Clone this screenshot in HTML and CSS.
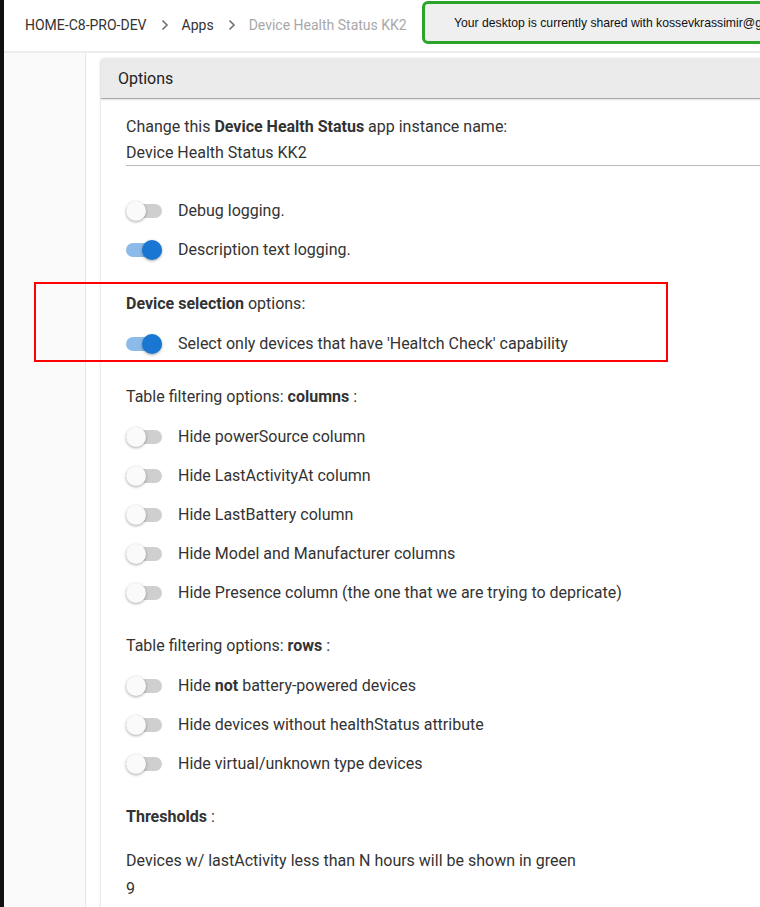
FILE: index.html
```html
<!DOCTYPE html>
<html lang="en">

<head>
    <meta charset="UTF-8">
    <meta name="viewport" content="width=device-width, initial-scale=1.0">
    <title>Device Health Status KK2</title>
    <link rel="stylesheet" href="styles.css">
</head>

<body>
    <div class="page">
        <header class="topbar">
            <nav class="crumbs">
                <span class="crumb">HOME-C8-PRO-DEV</span>
                <svg class="chev" width="8" height="12" viewBox="0 0 8 12"><path d="M1.5 1.5L6 6l-4.5 4.5"/></svg>
                <span class="crumb">Apps</span>
                <svg class="chev" width="8" height="12" viewBox="0 0 8 12"><path d="M1.5 1.5L6 6l-4.5 4.5"/></svg>
                <span class="crumb current">Device Health Status KK2</span>
            </nav>
        </header>

        <div class="layout">
            <aside class="sidebar"></aside>
            <main class="content">
                <section class="card">
                    <div class="card-head">Options</div>
                    <div class="card-body">
                        <p class="line">Change this <b>Device Health Status</b> app instance name:</p>
                        <div class="field">Device Health Status KK2</div>

                        <ul class="toggles first">
                            <li class="row"><span class="switch"><span class="thumb"></span></span>Debug logging.</li>
                            <li class="row"><span class="switch on"><span class="thumb"></span></span>Description text logging.</li>
                        </ul>

                        <p class="line section selection">
                            <b>Device selection</b> options:</p>
                        <ul class="toggles">
                            <li class="row"><span class="switch on"><span class="thumb"></span></span>Select only devices that have 'Healtch Check' capability</li>
                        </ul>

                        <p class="line section">Table filtering options: <b>columns</b> :</p>
                        <ul class="toggles">
                            <li class="row"><span class="switch"><span class="thumb"></span></span>Hide powerSource column</li>
                            <li class="row"><span class="switch"><span class="thumb"></span></span>Hide LastActivityAt column</li>
                            <li class="row"><span class="switch"><span class="thumb"></span></span>Hide LastBattery column</li>
                            <li class="row"><span class="switch"><span class="thumb"></span></span>Hide Model and Manufacturer columns</li>
                            <li class="row"><span class="switch"><span class="thumb"></span></span>Hide Presence column (the one that we are trying to depricate)</li>
                        </ul>

                        <p class="line section">Table filtering options: <b>rows</b> :</p>
                        <ul class="toggles">
                            <li class="row"><span class="switch"><span class="thumb"></span></span><span>Hide <b>not</b> battery-powered devices</span></li>
                            <li class="row"><span class="switch"><span class="thumb"></span></span>Hide devices without healthStatus attribute</li>
                            <li class="row"><span class="switch"><span class="thumb"></span></span>Hide virtual/unknown type devices</li>
                        </ul>

                        <p class="line section"><b>Thresholds</b> :</p>
                        <p class="line gap">Devices w/ lastActivity less than N hours will be shown in green</p>
                        <div class="value">9</div>
                    </div>
                </section>
            </main>
        </div>

        <!-- overlays from the screen share: the banner and the red annotation box -->
        <div class="share-banner">Your desktop is currently shared with kossevkrassimir@gmail.com</div>
        <div class="highlight"></div>
    </div>
</body>

</html>
```

FILE: styles.css
```css
html, body {
    margin: 0;
    height: 100%;
    overflow: hidden;
}

body {
    font-family: "Roboto", "Liberation Sans", sans-serif;
    font-size: 16px;
    color: #333;
    background: #fff;
}

.page {
    position: relative;
    height: 100%;
    border-left: 4px solid #111;
    display: flex;
    flex-direction: column;
    overflow: hidden;
}

.topbar {
    height: 51px;
    flex: none;
    border-bottom: 2px solid #ebebf0;
    display: flex;
    align-items: center;
    padding-left: 21px;
}

.crumbs {
    display: flex;
    align-items: center;
    gap: 14px;
    font-size: 14px;
    color: #333;
    margin-top: -2px;
}

.crumb.current {
    color: #a8a8a8;
}

.chev {
    fill: none;
    stroke: #707070;
    stroke-width: 1.6;
    margin-right: -1px;
}

.share-banner {
    position: absolute;
    left: 418px;
    top: 1px;
    width: 420px;
    height: 43px;
    box-sizing: border-box;
    border: 3px solid #2aa52a;
    border-radius: 6px;
    background: #efefef;
    padding-left: 29px;
    font-family: "Liberation Sans", Arial, sans-serif;
    font-size: 12.2px;
    color: #111;
    display: flex;
    align-items: center;
    white-space: nowrap;
}

.highlight {
    position: absolute;
    left: 30px;
    top: 282px;
    width: 634px;
    height: 80px;
    box-sizing: border-box;
    border: 2px solid #f00;
}

.layout {
    flex: 1;
    display: flex;
    min-height: 0;
}

.sidebar {
    width: 81px;
    flex: none;
    background: #fafafa;
    border-right: 1px solid #e6e6e6;
}

.content {
    flex: 1;
    min-width: 0;
    padding: 5px 0 0 15px;
}

.card {
    width: 720px;
    background: #fff;
    border-radius: 4px 4px 0 0;
    box-shadow: 0 1px 3px rgba(0, 0, 0, 0.22);
}

.card-head {
    height: 41px;
    box-sizing: border-box;
    background: #ebebeb;
    border-radius: 4px 4px 0 0;
    border-bottom: 1px solid #a9a9a9;
    box-shadow: 0 1px 2px rgba(0, 0, 0, 0.12);
    padding-left: 17px;
    display: flex;
    align-items: center;
    color: #222;
}

.card-body {
    padding: 16px 0 40px 25px;
}

.line {
    margin: 0;
    line-height: 24px;
}

.line b, .row b {
    font-weight: 700;
}

.field {
    margin-top: 2px;
    line-height: 24px;
    border-bottom: 1px solid #bbb;
}

.toggles {
    list-style: none;
    margin: 8px 0 0;
    padding: 0;
}

.toggles.first {
    margin-top: 25px;
}

.section {
    margin-top: 22px;
}

.section.selection {
    margin-top: 23px;
}

.row {
    height: 39px;
    display: flex;
    align-items: center;
    gap: 16px;
}

.switch {
    width: 36px;
    height: 14px;
    flex: none;
    border-radius: 7px;
    background: #cfcfcf;
    display: flex;
    align-items: center;
}

.thumb {
    width: 20px;
    height: 20px;
    flex: none;
    border-radius: 50%;
    background: #fafafa;
    box-shadow: 0 1px 3px rgba(0, 0, 0, 0.35);
}

.switch.on {
    background: #8dbbe9;
    justify-content: flex-end;
}

.switch.on .thumb {
    background: #1976d2;
}

.gap {
    margin-top: 20px;
}

.value {
    margin-top: 4px;
    line-height: 24px;
}
```
